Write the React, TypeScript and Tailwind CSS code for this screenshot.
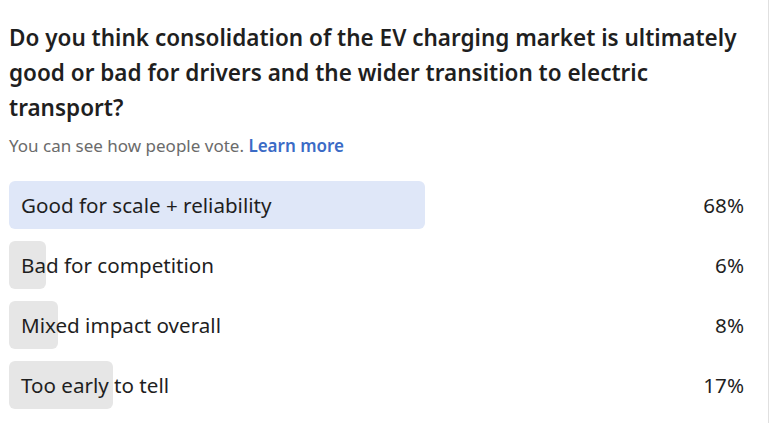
import React from "react";

type Option = { label: string; pct: number; mine?: boolean };

const options: Option[] = [
  { label: "Good for scale + reliability", pct: 68, mine: true },
  { label: "Bad for competition", pct: 6 },
  { label: "Mixed impact overall", pct: 8 },
  { label: "Too early to tell", pct: 17 },
];

function PollRow({ option }: { option: Option }) {
  return (
    <div className="flex items-center h-12">
      <div className="relative w-[612px] h-12">
        <div
          className={`absolute left-0 top-0 h-12 rounded-md ${option.mine ? "bg-[#dfe7f8]" : "bg-[#e6e6e6]"}`}
          style={{ width: `${option.pct}%` }}
        />
        <p className="relative h-12 flex items-center pl-3 text-[20.6px] text-[#1f1f1f]">{option.label}</p>
      </div>
      <p className="ml-auto text-[20.6px] text-[#1f1f1f]">{option.pct}%</p>
    </div>
  );
}

export default function App() {
  return (
    <div className="w-[769px] h-[423px] bg-white border-r border-[#e0e0e0] pl-[9px] pr-[24px] pt-[20px] font-['Noto_Sans',sans-serif]">
      <h1 className="text-[22.5px] leading-[35px] font-semibold text-[#1f1f1f]">
        Do you think consolidation of the EV charging market is ultimately good or bad for drivers and the wider transition to electric transport?
      </h1>
      <p className="mt-[9px] text-[17px] leading-[24px] text-[#6b6b6b]">
        You can see how people vote. <span className="font-semibold text-[#3b6bc6]">Learn more</span>
      </p>
      <div className="mt-[23px] flex flex-col gap-3">
        {options.map((o) => (
          <PollRow key={o.label} option={o} />
        ))}
      </div>
    </div>
  );
}
